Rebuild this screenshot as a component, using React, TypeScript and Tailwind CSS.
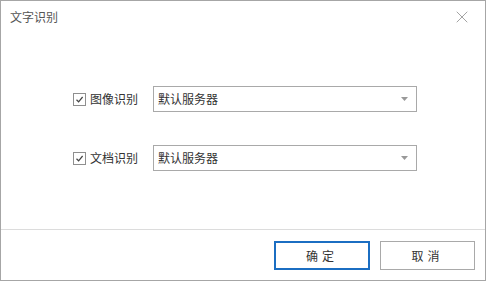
import { X } from 'lucide-react'

const font = { fontFamily: '"Microsoft YaHei", "Noto Sans CJK SC", sans-serif' }

function Row({ label }: { label: string }) {
  return (
    <div className="flex items-center h-[26px]">
      <div className="ml-[72px] w-[13px] h-[13px] border border-[#8f8f8f] bg-white flex items-center justify-center">
        <svg width="9" height="9" viewBox="0 0 9 9" fill="none">
          <path d="M1.5 4.8 L3.6 6.8 L7.6 2" stroke="#444" strokeWidth="1.2" />
        </svg>
      </div>
      <span className="ml-[4px] w-[63px] text-[12px] text-[#333] leading-none">{label}</span>
      <div className="w-[264px] h-[26px] border border-[#a9a9a9] bg-white flex items-center pl-[4px] pr-[8px]">
        <span className="flex-1 text-[12px] text-[#333] leading-none">默认服务器</span>
        <svg width="7" height="4" viewBox="0 0 7 4">
          <path d="M0 0 L7 0 L3.5 4 Z" fill="#999" />
        </svg>
      </div>
    </div>
  )
}

export default function App() {
  return (
    <div className="w-[486px] h-[281px] bg-white border border-[#a6a6a6] flex flex-col" style={font}>
      <div className="h-[32px] flex items-center justify-between pl-[9px] pr-[13px]">
        <span className="text-[12px] text-[#555]">文字识别</span>
        <X className="w-[20px] h-[20px] text-[#9a9a9a]" strokeWidth={1.1} />
      </div>
      <div className="h-[196px] flex flex-col pt-[53px] gap-[33px]">
        <Row label="图像识别" />
        <Row label="文档识别" />
      </div>
      <div className="flex-1 border-t border-[#dcdcdc] flex justify-end items-start pt-[11px] pr-[10px] gap-[10px]">
        <button className="w-[96px] h-[29px] border-2 border-[#1b6ec2] bg-white text-[12px] text-[#333] tracking-[4px]">确定</button>
        <button className="w-[95px] h-[29px] border border-[#a9a9a9] bg-white text-[12px] text-[#333] tracking-[4px]">取消</button>
      </div>
    </div>
  )
}
